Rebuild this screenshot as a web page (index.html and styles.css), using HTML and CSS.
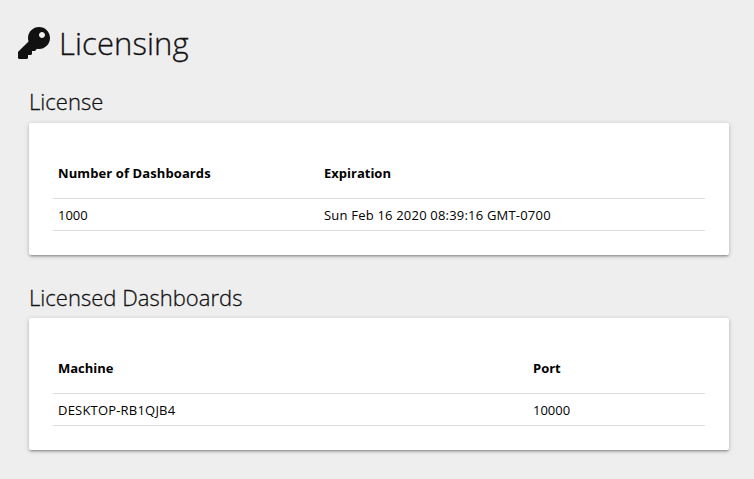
FILE: index.html
```html
<!DOCTYPE html>
<html lang="en">
<head>
<meta charset="utf-8">
<title>Licensing</title>
<link rel="stylesheet" href="styles.css">
</head>
<body>
<header class="page-header">
<svg class="key" viewBox="0 0 512 512" aria-hidden="true"><path fill="currentColor" d="M512 176.001C512 273.203 433.202 352 336 352c-11.220 0-22.190-1.062-32.827-3.069l-24.012 27.014A23.999 23.999 0 0 1 261.223 384H224v40c0 13.255-10.745 24-24 24h-40v40c0 13.255-10.745 24-24 24H24c-13.255 0-24-10.745-24-24v-78.059c0-6.365 2.529-12.470 7.029-16.971l161.802-161.802C163.108 213.814 160 195.271 160 176 160 78.798 238.797.001 335.999 0 433.488-.001 512 78.511 512 176.001zM336 128c0 26.510 21.490 48 48 48s48-21.490 48-48-21.490-48-48-48-48 21.490-48 48z"/></svg>
<h1>Licensing</h1>
</header>
<main>
<section class="license">
<h2>License</h2>
<div class="card">
<table>
<colgroup><col class="c-count"><col></colgroup>
<thead><tr><th>Number of Dashboards</th><th class="exact">Expiration</th></tr></thead>
<tbody><tr><td class="number">1000</td><td>Sun Feb 16 2020 08:39:16 GMT-0700</td></tr></tbody>
</table>
</div>
</section>
<section class="dashboards">
<h2>Licensed Dashboards</h2>
<div class="card">
<table>
<colgroup><col class="c-machine"><col></colgroup>
<thead><tr><th class="exact">Machine</th><th class="exact">Port</th></tr></thead>
<tbody><tr><td>DESKTOP-RB1QJB4</td><td class="number">10000</td></tr></tbody>
</table>
</div>
</section>
</main>
</body>
</html>
```
FILE: styles.css
```css
* { box-sizing: border-box; }
body { margin: 0; height: 479px; overflow: hidden; background: #eee; color: #111; font-family: "Segoe UI", "Open Sans", "Noto Sans", sans-serif; font-size: 13px; }
.page-header { display: flex; align-items: center; height: 86px; padding-left: 18px; gap: 9px; }
.key { width: 32px; height: 32px; }
h1, h2 { margin: 0; font-weight: 300; -webkit-text-stroke: .3px #111; }
h1 { font-size: 31px; line-height: 40px; letter-spacing: .1px; }
h2 { font-size: 22px; line-height: 30px; letter-spacing: .03px; }
main { padding: 0 25px 0 29px; }
.license { height: 195px; }
.dashboards { padding-top: 1px; }
.card { height: 132px; margin-top: 7px; padding: 26px 24px 24px; background: #fff; border-radius: 2px; box-shadow: 0 2px 2px rgba(0,0,0,.14), 0 3px 1px -2px rgba(0,0,0,.12), 0 1px 5px rgba(0,0,0,.2); }
.dashboards .card { margin-top: 6px; }
table { width: 100%; border-collapse: separate; border-spacing: 0; table-layout: fixed; color: #000; }
th, td { border-bottom: 1px solid #ddd; text-align: left; vertical-align: middle; white-space: nowrap; }
th { height: 50px; padding: 0 5px 2px; font-weight: 700; letter-spacing: .1px; }
td { height: 32px; padding: 0 5px; letter-spacing: .2px; }
.number, .exact { letter-spacing: 0; }
.c-count { width: 266px; }
.c-machine { width: 475px; }
```
